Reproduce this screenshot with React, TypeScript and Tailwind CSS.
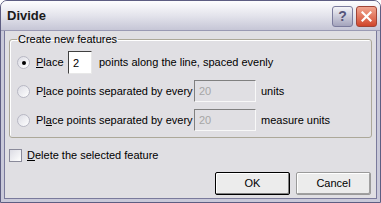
import React, { useState } from "react";

const font = { fontFamily: '"Liberation Sans", Arial, sans-serif' };

const Radio = ({ checked, onClick }: { checked: boolean; onClick: () => void }) => (
  <span
    onClick={onClick}
    className="relative inline-block w-[13px] h-[13px] rounded-full border border-[#b8b8c4] bg-gradient-to-br from-[#dcdce4] to-white shrink-0"
  >
    {checked && (
      <span className="absolute left-[3.5px] top-[3.5px] w-[4px] h-[4px] rounded-full bg-black" />
    )}
  </span>
);

const App = () => {
  const [mode, setMode] = useState(0);
  const [count, setCount] = useState("2");
  const [del, setDel] = useState(false);

  return (
    <div
      className="w-[381px] h-[203px] flex flex-col bg-[#e0dfe3] text-[11px] text-black overflow-hidden border border-[#5d5d82] rounded-t-[7px]"
      style={font}
    >
      <div className="h-[30px] shrink-0 flex items-center pl-[6px] pr-[3px] pt-[1px] bg-gradient-to-b from-[#fdfdfe] via-[#e4e4ec] to-[#c6c6d6] border-b border-[#9a9ab4]">
        <span className="font-bold text-[13px] text-[#1a1a1a] flex-1">Divide</span>
        <div className="flex gap-[3px]">
          <div className="w-[21px] h-[21px] rounded-[3px] border border-[#7b7b9c] bg-gradient-to-b from-[#f4f4f8] to-[#a4a4bc] flex items-center justify-center text-[14px] font-bold text-[#55557a]">
            ?
          </div>
          <div className="w-[21px] h-[21px] rounded-[3px] border border-[#a04436] bg-gradient-to-b from-[#f0a58f] to-[#d0442a] flex items-center justify-center">
            <svg width="11" height="11" viewBox="0 0 11 11">
              <path d="M1.5 1.5 L9.5 9.5 M9.5 1.5 L1.5 9.5" stroke="white" strokeWidth="2.2" strokeLinecap="square" />
            </svg>
          </div>
        </div>
      </div>

      <div className="flex-1 flex flex-col border-x-[3px] border-b-[3px] border-[#c9c9d9] shadow-[inset_1px_0_#7a7a9c,inset_-1px_0_#7a7a9c,inset_0_-1px_#7a7a9c] px-[5px]">
        <fieldset className="mt-[2px] border border-[#aca899] rounded-[3px] px-[7px] pb-[6px] pt-0 shadow-[inset_1px_1px_#fff]">
          <legend className="px-[1px] leading-[13px]">Create new features</legend>

          <div className="flex items-center h-[23px] mt-[5px]">
            <Radio checked={mode === 0} onClick={() => setMode(0)} />
            <span className="ml-[6px] w-[32px]">
              <u>P</u>lace
            </span>
            <input
              value={count}
              onChange={(e) => setCount(e.target.value)}
              className="w-[24px] h-[23px] px-[4px] bg-white border border-[#e8e8e8] border-t-[#404040] border-l-[#404040] outline-none"
              style={font}
            />
            <span className="ml-[7px]">points along the line, spaced evenly</span>
          </div>

          <div className="flex items-center h-[22px] mt-[6px]">
            <Radio checked={mode === 1} onClick={() => setMode(1)} />
            <span className="ml-[6px] w-[158px]">
              P<u>l</u>ace points separated by every
            </span>
            <input
              disabled
              value="20"
              className="w-[62px] h-[22px] px-[4px] bg-[#e0dfe3] text-[#a6a6a6] border border-[#f8f8f8] border-t-[#808080] border-l-[#808080]"
              style={font}
            />
            <span className="ml-[5px]">units</span>
          </div>

          <div className="flex items-center h-[22px] mt-[7px]">
            <Radio checked={mode === 2} onClick={() => setMode(2)} />
            <span className="ml-[6px] w-[158px]">
              Pl<u>a</u>ce points separated by every
            </span>
            <input
              disabled
              value="20"
              className="w-[62px] h-[22px] px-[4px] bg-[#e0dfe3] text-[#a6a6a6] border border-[#f8f8f8] border-t-[#808080] border-l-[#808080]"
              style={font}
            />
            <span className="ml-[5px]">measure units</span>
          </div>
        </fieldset>

        <label className="flex items-center mt-[9px]">
          <span
            onClick={() => setDel(!del)}
            className="w-[13px] h-[13px] border border-[#8a8a9a] bg-gradient-to-br from-[#dcdce4] to-white flex items-center justify-center text-[10px]"
          >
            {del ? "✓" : ""}
          </span>
          <span className="ml-[5px]">
            <u>D</u>elete the selected feature
          </span>
        </label>

        <div className="flex justify-end gap-[6px] mt-[8px] pr-[1px]">
          <button
            className="w-[75px] h-[23px] rounded-[2px] border border-black bg-[#ececec] shadow-[inset_-1px_-1px_#808080,inset_1px_1px_#fff]"
            style={font}
          >
            OK
          </button>
          <button
            className="w-[75px] h-[23px] rounded-[2px] border border-[#9a9a9a] bg-[#ececec] shadow-[inset_-1px_-1px_#a0a0a0,inset_1px_1px_#fff]"
            style={font}
          >
            Cancel
          </button>
        </div>
      </div>
    </div>
  );
};

export default App;
